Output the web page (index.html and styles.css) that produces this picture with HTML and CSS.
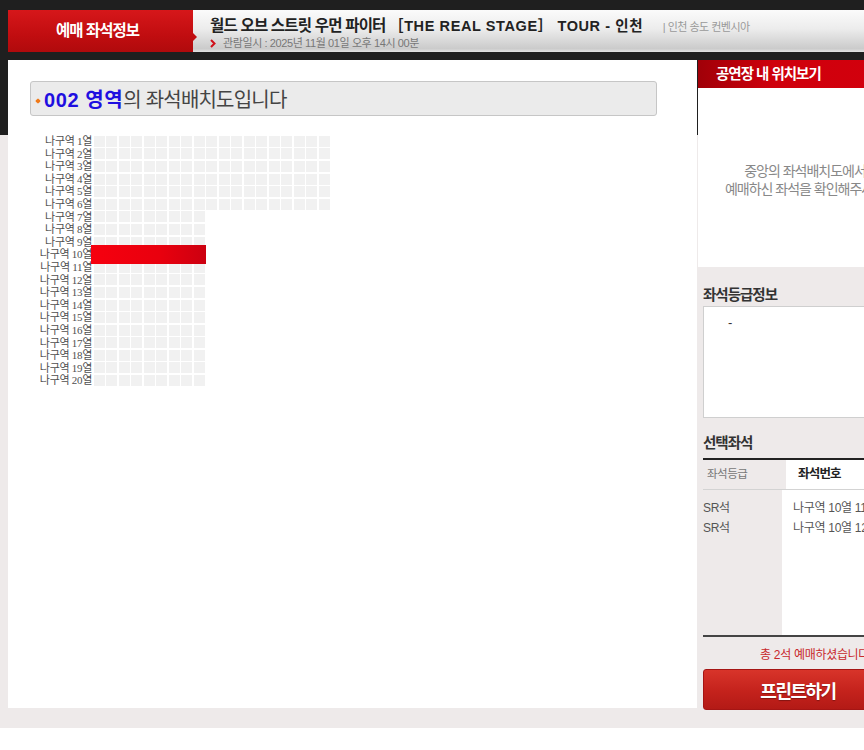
FILE: index.html
```html
<!DOCTYPE html>
<html lang="ko">
<head>
    <meta charset="UTF-8">
    <meta name="viewport" content="width=device-width, initial-scale=1.0">
    <title>예매 좌석정보</title>
    <link rel="stylesheet" href="styles.css">
</head>
<body>

    <div class="page">
        <div class="topbar">
            <div class="topbar-label">예매 좌석정보</div>
            <div class="topbar-info">
                <div class="show-title">
                    월드 오브 스트릿 우먼 파이터 <span class="show-en">［THE REAL STAGE］ TOUR - 인천</span>
                    <span class="venue">| 인천 송도 컨벤시아</span>
                </div>
                <div class="show-date">
                    <svg class="chevron" width="6" height="9" viewBox="0 0 6 9"><path d="M1 1 L4.5 4.5 L1 8" fill="none" stroke="#d0101a" stroke-width="2"/></svg>
                    관람일시 : 2025년 11월 01일 오후 14시 00분
                </div>
            </div>
        </div>

        <div class="content">
            <div class="map-panel">
                <div class="map-title"><span class="dot"></span><b>002 영역</b>의 좌석배치도입니다</div>
                <div class="seat-map" id="seatMap"></div>
            </div>

            <div class="side">
                <div class="side-head">공연장 내 위치보기</div>
                <div class="side-info">중앙의 좌석배치도에서<br>예매하신 좌석을 확인해주세요</div>
                <div class="side-body">
                    <h3>좌석등급정보</h3>
                    <div class="grade-box">-</div>

                    <h3>선택좌석</h3>
                    <div class="picked">
                        <div class="picked-head">
                            <div class="col1">좌석등급</div>
                            <div class="col2">좌석번호</div>
                        </div>
                        <div class="picked-body">
                            <div class="col1">SR석<br>SR석</div>
                            <div class="col2">나구역 10열 11번<br>나구역 10열 12번</div>
                        </div>
                    </div>

                    <p class="total">총 2석 예매하셨습니다.</p>
                    <button class="print-btn">프린트하기</button>
                </div>
            </div>
        </div>
    </div>

    <script>
        // Build seat rows: rows 1-6 have 19 seats, the rest 9
        const seatMap = document.getElementById('seatMap');
        for (let r = 1; r <= 20; r++) {
            const row = document.createElement('div');
            row.className = 'seat-row';

            const label = document.createElement('div');
            label.className = 'row-label';
            label.textContent = '나구역 ' + r + '열';
            row.appendChild(label);

            const seats = document.createElement('div');
            seats.className = 'seats';
            if (r === 10) {
                const bar = document.createElement('div');
                bar.className = 'picked-bar';
                seats.appendChild(bar);
            } else {
                const count = r <= 6 ? 19 : 9;
                for (let i = 0; i < count; i++) {
                    const seat = document.createElement('span');
                    seat.className = 'seat';
                    seats.appendChild(seat);
                }
            }
            row.appendChild(seats);
            seatMap.appendChild(row);
        }
    </script>

</body>
</html>
```

FILE: styles.css
```css
html {
    background-color: #fff;
}
body {
    margin: 0;
    padding: 0;
    overflow: hidden;
    font-family: "Liberation Sans", "Noto Sans CJK KR", sans-serif;
}
.page {
    width: 864px;
    height: 728px;
    overflow: hidden;
    background: linear-gradient(#1f1f1f 0, #1f1f1f 135px, #eeeaea 135px);
}

/* top bar */
.topbar {
    display: flex;
    height: 42px;
    padding-top: 10px;
    margin-bottom: 8px;
}
.topbar-label {
    position: relative;
    width: 185px;
    margin-left: 8px;
    background: linear-gradient(#d6171a, #c10d10 60%, #b00a0c);
    color: #fff;
    font-size: 15.5px;
    font-weight: bold;
    letter-spacing: -1px;
    line-height: 42px;
    text-align: center;
    padding-right: 6px;
    box-sizing: border-box;
}
.topbar-label::after {
    content: "";
    position: absolute;
    right: -4px;
    top: 23px;
    border-top: 4px solid transparent;
    border-bottom: 4px solid transparent;
    border-left: 4px solid #c10d10;
}
.topbar-info {
    flex: 1;
    padding-left: 17px;
    background: linear-gradient(#fbfbfb, #ececec 45%, #cbcbcb 92%, #e2e2e2);
    white-space: nowrap;
}
.show-title {
    margin-top: 7px;
    line-height: 18px;
    font-size: 15.5px;
    font-weight: bold;
    letter-spacing: -0.8px;
    color: #222;
}
.show-en {
    font-size: 14.5px;
    letter-spacing: 0.6px;
}
.venue {
    margin-left: 16px;
    font-size: 11px;
    font-weight: normal;
    letter-spacing: -0.5px;
    color: #999;
}
.show-date {
    display: flex;
    align-items: center;
    line-height: 14px;
    font-size: 11px;
    letter-spacing: -0.4px;
    color: #777;
}
.chevron {
    margin-right: 7px;
}

/* content */
.content {
    display: flex;
    gap: 1px;
}
.map-panel {
    width: 689px;
    height: 648px;
    margin-left: 8px;
    padding: 21px 0 0 22px;
    box-sizing: border-box;
    background-color: #fff;
    flex-shrink: 0;
}
.map-title {
    display: flex;
    align-items: center;
    width: 627px;
    height: 35px;
    box-sizing: border-box;
    border: 1px solid #c6c6c6;
    border-radius: 3px;
    background-color: #ebebeb;
    font-size: 20px;
    letter-spacing: -0.8px;
    color: #444;
    margin-bottom: 19px;
}
.map-title b {
    color: #1f0fe0;
    letter-spacing: 0.6px;
}
.dot {
    width: 4px;
    height: 4px;
    background-color: #f07a1a;
    border-radius: 1px;
    transform: rotate(45deg);
    margin: 5px 4px 0 5px;
}

.seat-row {
    display: flex;
    align-items: center;
    height: 12.6px;
}
.row-label {
    width: 62px;
    text-align: right;
    font-family: "Liberation Serif", "Noto Sans CJK KR", serif;
    font-size: 11px;
    line-height: 12.6px;
    letter-spacing: -0.3px;
    color: #505050;
    white-space: nowrap;
}
.seats {
    display: flex;
    align-items: center;
}
.seat {
    width: 11px;
    height: 11px;
    margin-left: 1.5px;
    background-color: #f1f1f1;
}
.picked-bar {
    position: relative;
    z-index: 1;
    width: 115px;
    height: 19px;
    margin-left: -1px;
    background: linear-gradient(to right, #f6000f, #e9000e 60%, #cc0010);
}

/* right side */
.side {
    width: 214px;
    flex-shrink: 0;
}
.side-head {
    height: 28px;
    line-height: 28px;
    padding-left: 18px;
    background: linear-gradient(to right, #a00008, #cf000c 35%, #d3000d);
    color: #fff;
    font-size: 14.5px;
    font-weight: bold;
    letter-spacing: -1px;
}
.side-info {
    height: 179px;
    padding-top: 5px;
    box-sizing: border-box;
    display: flex;
    align-items: center;
    justify-content: center;
    text-align: center;
    background-color: #fff;
    color: #888;
    font-size: 14px;
    letter-spacing: -1px;
    line-height: 18px;
}
.side-body {
    padding: 0 5px;
    background-color: #eeeaea;
    height: 461px;
}
.side-body h3 {
    margin: 0;
    padding-top: 19px;
    line-height: 18px;
    font-size: 14.5px;
    letter-spacing: -1px;
    color: #333;
}
.grade-box {
    height: 112px;
    margin-top: 2px;
    box-sizing: border-box;
    border: 1px solid #cfcfcf;
    background-color: #fff;
    padding: 8px 0 0 24px;
    line-height: 16px;
    font-size: 13px;
    color: #333;
}
.grade-box + h3 {
    padding-top: 16px !important;
}
.picked {
    margin-top: 6px;
    border-top: 2px solid #222;
    border-bottom: 2px solid #444;
}
.picked-head {
    display: flex;
    height: 29px;
    line-height: 29px;
    border-bottom: 1px solid #d3d3d3;
}
.picked-body {
    display: flex;
    height: 145px;
}
.col1 {
    width: 79px;
    flex-shrink: 0;
}
.col2 {
    flex: 1;
    background-color: #fff;
}
.picked-head .col1 {
    padding-left: 4px;
    font-size: 11.5px;
    letter-spacing: -0.5px;
    color: #777;
}
.picked-head .col2 {
    padding-left: 12px;
    font-size: 12.5px;
    font-weight: bold;
    letter-spacing: -0.8px;
    color: #222;
}
.picked-body .col1,
.picked-body .col2 {
    padding-top: 8px;
    line-height: 20px;
    font-size: 12px;
    letter-spacing: -0.3px;
    color: #555;
}
.picked-body .col2 {
    padding-left: 11px;
}
.total {
    margin: 10px 0 6px;
    padding-left: 57px;
    line-height: 16px;
    font-size: 12px;
    letter-spacing: -0.3px;
    color: #c8282a;
    white-space: nowrap;
}
.print-btn {
    display: block;
    width: 190px;
    height: 41px;
    border: 1px solid #a51514;
    border-radius: 3px;
    background: linear-gradient(#d8342a, #c4221c 55%, #b31a16);
    color: #fff;
    font-family: "Liberation Sans", "Noto Sans CJK KR", sans-serif;
    font-size: 18px;
    font-weight: bold;
    letter-spacing: -1.5px;
    text-shadow: 0 1px 1px rgba(0, 0, 0, 0.3);
    cursor: pointer;
}
```
